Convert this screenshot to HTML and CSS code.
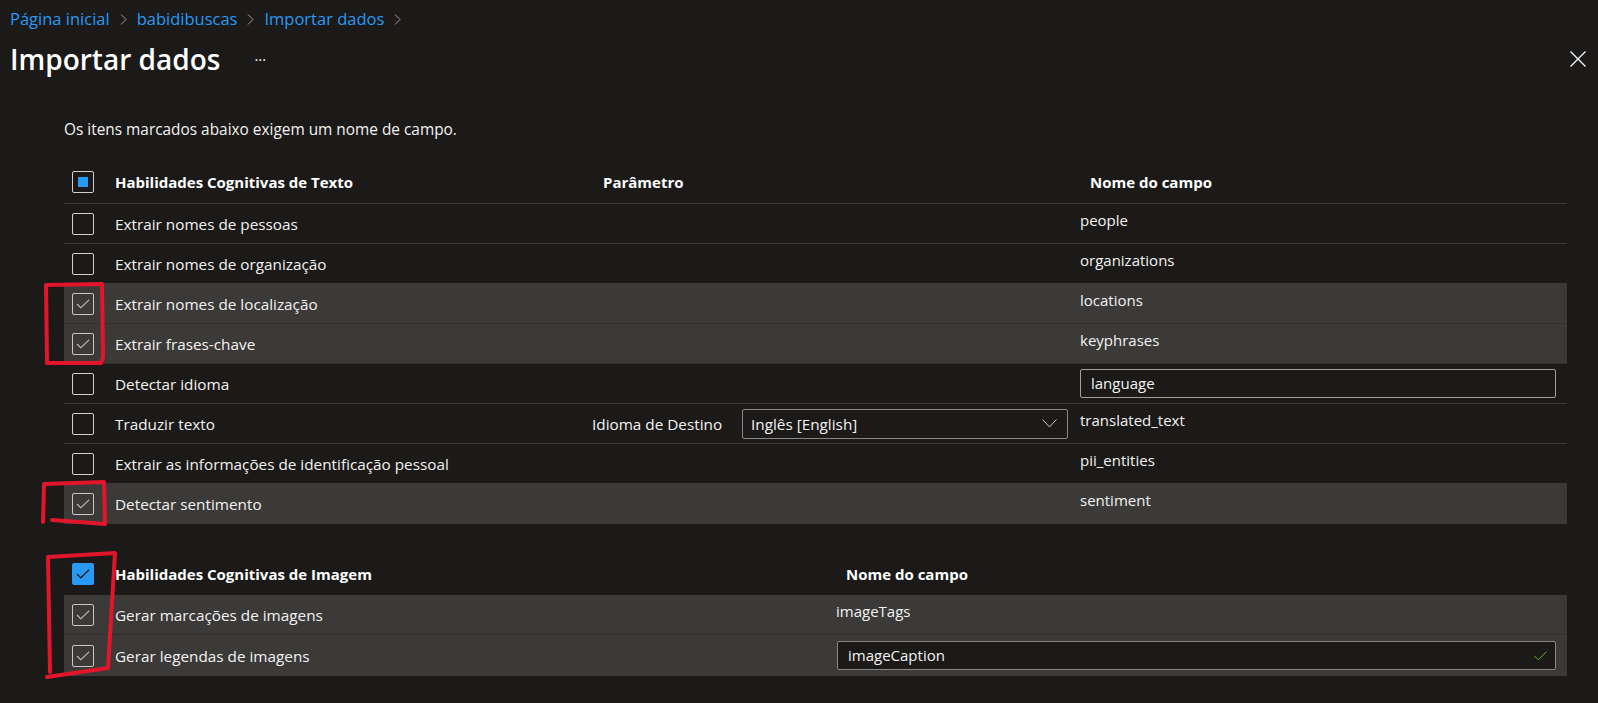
FILE: index.html
```html
<!DOCTYPE html>
<html lang="pt">
<head>
<meta charset="utf-8">
<title>Importar dados</title>
<link rel="stylesheet" href="styles.css">
</head>
<body>
<div class="page">
  <nav class="crumbs">
    <a class="crumb">Página inicial</a>
    <svg class="sep" width="7" height="11" viewBox="0 0 7 11"><path d="M1 0.5 L6 5.5 L1 10.5" fill="none" stroke="#a19f9d" stroke-width="1"/></svg>
    <a class="crumb">babidibuscas</a>
    <svg class="sep" width="7" height="11" viewBox="0 0 7 11"><path d="M1 0.5 L6 5.5 L1 10.5" fill="none" stroke="#a19f9d" stroke-width="1"/></svg>
    <a class="crumb">Importar dados</a>
    <svg class="sep" width="7" height="11" viewBox="0 0 7 11"><path d="M1 0.5 L6 5.5 L1 10.5" fill="none" stroke="#a19f9d" stroke-width="1"/></svg>
  </nav>

  <div class="titlebar">
    <h1 class="title">Importar dados</h1>
    <span class="more">···</span>
    <span class="close">
      <svg width="16" height="16" viewBox="0 0 16 16"><path d="M0.5 0.5 L15.5 15.5 M15.5 0.5 L0.5 15.5" stroke="#ffffff" stroke-width="1.2" fill="none"/></svg>
    </span>
  </div>

  <main class="content">
    <p class="intro">Os itens marcados abaixo exigem um nome de campo.</p>

    <section class="table">
      <div class="row head">
        <div class="cbcell"><span class="cb indeterminate"><span class="dot"></span></span></div>
        <div class="lbl bold">Habilidades Cognitivas de Texto</div>
        <div class="param bold head-param">Parâmetro</div>
        <div class="field bold head-field">Nome do campo</div>
      </div>

      <div class="row">
        <div class="cbcell"><span class="cb"></span></div>
        <div class="lbl">Extrair nomes de pessoas</div>
        <div class="param"></div>
        <div class="field">people</div>
      </div>
      <div class="row">
        <div class="cbcell"><span class="cb"></span></div>
        <div class="lbl">Extrair nomes de organização</div>
        <div class="param"></div>
        <div class="field">organizations</div>
      </div>
      <div class="row sel">
        <div class="cbcell"><span class="cb checked"><svg width="14" height="10" viewBox="0 0 14 10"><path d="M1 5 L4.8 8.8 L13 0.8" fill="none" stroke="#c8c6c4" stroke-width="1.1"/></svg></span></div>
        <div class="lbl">Extrair nomes de localização</div>
        <div class="param"></div>
        <div class="field">locations</div>
      </div>
      <div class="row sel">
        <div class="cbcell"><span class="cb checked"><svg width="14" height="10" viewBox="0 0 14 10"><path d="M1 5 L4.8 8.8 L13 0.8" fill="none" stroke="#c8c6c4" stroke-width="1.1"/></svg></span></div>
        <div class="lbl">Extrair frases-chave</div>
        <div class="param"></div>
        <div class="field">keyphrases</div>
      </div>
      <div class="row">
        <div class="cbcell"><span class="cb"></span></div>
        <div class="lbl">Detectar idioma</div>
        <div class="param"></div>
        <div class="field with-input"><div class="input">language</div></div>
      </div>
      <div class="row">
        <div class="cbcell"><span class="cb"></span></div>
        <div class="lbl">Traduzir texto</div>
        <div class="param with-select">
          <span class="plabel">Idioma de Destino</span>
          <div class="select">
            <span>Inglês [English]</span>
            <svg width="15" height="9" viewBox="0 0 15 9"><path d="M0.5 0.5 L7.5 8 L14.5 0.5" fill="none" stroke="#c8c6c4" stroke-width="1"/></svg>
          </div>
        </div>
        <div class="field">translated_text</div>
      </div>
      <div class="row">
        <div class="cbcell"><span class="cb"></span></div>
        <div class="lbl">Extrair as informações de identificação pessoal</div>
        <div class="param"></div>
        <div class="field">pii_entities</div>
      </div>
      <div class="row sel last">
        <div class="cbcell"><span class="cb checked"><svg width="14" height="10" viewBox="0 0 14 10"><path d="M1 5 L4.8 8.8 L13 0.8" fill="none" stroke="#c8c6c4" stroke-width="1.1"/></svg></span></div>
        <div class="lbl">Detectar sentimento</div>
        <div class="param"></div>
        <div class="field">sentiment</div>
      </div>
    </section>

    <section class="table image">
      <div class="irow ihead">
        <div class="cbcell"><span class="cb blue"><svg width="14" height="10" viewBox="0 0 14 10"><path d="M1 5 L4.8 8.8 L13 0.8" fill="none" stroke="#1b1a19" stroke-width="1.2"/></svg></span></div>
        <div class="lbl bold">Habilidades Cognitivas de Imagem</div>
        <div class="field bold head-field">Nome do campo</div>
      </div>
      <div class="irow sel">
        <div class="cbcell"><span class="cb checked"><svg width="14" height="10" viewBox="0 0 14 10"><path d="M1 5 L4.8 8.8 L13 0.8" fill="none" stroke="#c8c6c4" stroke-width="1.1"/></svg></span></div>
        <div class="lbl">Gerar marcações de imagens</div>
        <div class="field">imageTags</div>
      </div>
      <div class="irow sel">
        <div class="cbcell"><span class="cb checked"><svg width="14" height="10" viewBox="0 0 14 10"><path d="M1 5 L4.8 8.8 L13 0.8" fill="none" stroke="#c8c6c4" stroke-width="1.1"/></svg></span></div>
        <div class="lbl">Gerar legendas de imagens</div>
        <div class="field with-input"><div class="input valid"><span>imageCaption</span>
          <svg width="13" height="10" viewBox="0 0 13 10"><path d="M0.5 5 L4.3 8.8 L12.5 0.6" fill="none" stroke="#6bb700" stroke-width="1"/></svg></div></div>
      </div>
    </section>
  </main>

  <svg class="annot" width="1598" height="703" viewBox="0 0 1598 703">
    <g fill="none" stroke="#e3152b" stroke-width="4" stroke-linejoin="round" stroke-linecap="round">
      <path d="M46 285 L102 284 L103 357 L101 363 L47 363 Z"/>
      <path d="M45 484 L104 482 L105 524 L52 520 M44 484 L43 522"/>
      <path d="M48 557 L115 553 L108 668 L47 677 M48 557 L50 672"/>
    </g>
  </svg>
</div>
</body>
</html>
```

FILE: styles.css
```css
html, body {
  margin: 0;
  padding: 0;
  background: #1b1a19;
}
body {
  font-family: "Segoe UI", "Open Sans", "Noto Sans", sans-serif;
  font-size: 15.3px;
  color: #f3f2f1;
}
.page {
  position: relative;
  width: 1598px;
  height: 703px;
  overflow: hidden;
}
.crumbs {
  display: flex;
  align-items: center;
  gap: 9px;
  padding: 9px 0 0 10px;
  height: 20px;
  line-height: 20px;
  font-size: 16.5px;
}
.crumb {
  color: #2899f5;
}
.sep {
  margin: 0 1px;
}
.titlebar {
  display: flex;
  align-items: center;
  margin-top: 12px;
  height: 36px;
  padding-left: 10px;
}
.title {
  margin: 0;
  font-size: 28px;
  font-weight: 600;
  line-height: 36px;
  color: #ffffff;
}
.more {
  margin-left: 34px;
  font-size: 15px;
  color: #f3f2f1;
  line-height: 36px;
}
.close {
  margin-left: auto;
  margin-right: 12px;
  display: flex;
  align-items: center;
  height: 16px;
}
.content {
  padding: 0 31px 0 64px;
}
.intro {
  margin: 43px 0 20px 0;
  line-height: 20px;
  font-size: 15.4px;
}
.row {
  display: grid;
  grid-template-columns: 51px 477px 488px 1fr;
  height: 40px;
  box-sizing: border-box;
  border-bottom: 1px solid #3b3a39;
  align-items: center;
}
.row.head {
  height: 44px;
}
.row.sel {
  background: #3b3a39;
  border-bottom-color: #323130;
}
.row.last {
  border-bottom: none;
}
.cbcell {
  padding-left: 8px;
  display: flex;
  align-items: center;
}
.cb {
  width: 20px;
  height: 20px;
  border: 1px solid #d2d0ce;
  border-radius: 2px;
  box-sizing: content-box;
  display: flex;
  align-items: center;
  justify-content: center;
}
.cb.checked {
  border-color: #c8c6c4;
}
.cb.indeterminate .dot {
  width: 10px;
  height: 10px;
  background: #2899f5;
}
.cb.blue {
  background: #2899f5;
  border-color: #2899f5;
}
.lbl {
  line-height: 20px;
  white-space: nowrap;
}
.bold {
  font-weight: 700;
  font-size: 15px;
  color: #ffffff;
}
.head-param {
  padding-left: 11px;
}
.head-field {
  padding-left: 10px;
}
.field {
  align-self: start;
  padding-top: 6px;
  line-height: 20px;
  font-size: 15px;
}
.row.head .field,
.row.head .param {
  align-self: center;
  padding-top: 0;
}
.field.with-input {
  align-self: center;
  padding-top: 0;
  padding-right: 11px;
}
.input {
  height: 29px;
  box-sizing: border-box;
  border: 1px solid #a19f9d;
  border-radius: 2px;
  background: #1b1a19;
  padding: 0 10px;
  line-height: 27px;
  display: flex;
  align-items: center;
  justify-content: space-between;
}
.input.valid {
  border-color: #8a8886;
  padding-right: 8px;
}
.param.with-select {
  display: flex;
  align-items: center;
  padding-right: 12px;
}
.plabel {
  line-height: 20px;
}
.select {
  margin-left: auto;
  width: 326px;
  height: 30px;
  box-sizing: border-box;
  border: 1px solid #8a8886;
  border-radius: 2px;
  display: flex;
  align-items: center;
  justify-content: space-between;
  padding: 0 10px 0 8px;
}
.image {
  margin-top: 29px;
}
.irow {
  display: grid;
  grid-template-columns: 51px 721px 1fr;
  height: 40px;
  box-sizing: border-box;
  align-items: center;
}
.irow.ihead {
  height: 42px;
}
.irow.sel {
  background: #3b3a39;
  border-bottom: 1px solid #323130;
}
.irow.sel:last-child {
  height: 41px;
  border-bottom: none;
}
.irow .field.with-input {
  padding-left: 1px;
}
.irow.ihead .field {
  align-self: center;
  padding-top: 0;
}
.annot {
  position: absolute;
  left: 0;
  top: 0;
  pointer-events: none;
}
```
